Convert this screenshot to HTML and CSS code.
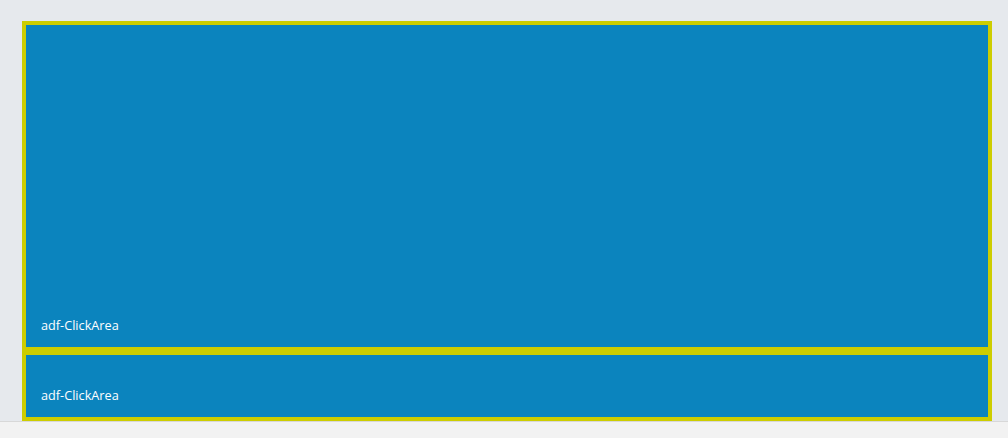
FILE: index.html
```html
<!DOCTYPE html>
<html>
<head>
<meta charset="utf-8">
<link rel="stylesheet" href="styles.css">
</head>
<body>
<div class="page">
  <div class="stack">
    <div class="area area-large"><span class="label">adf-ClickArea</span></div>
    <div class="area area-small"><span class="label">adf-ClickArea</span></div>
  </div>
</div>
<div class="footer"></div>
</body>
</html>
```
FILE: styles.css
```css
html, body {
  margin: 0;
  padding: 0;
  height: 100%;
}
body {
  background: #e6e9ed;
  font-family: "Open Sans", "Noto Sans", sans-serif;
  display: flex;
  flex-direction: column;
}
.page {
  padding: 21px 0 0 22px;
  flex: 1;
}
.stack {
  width: 970px;
  display: flex;
  flex-direction: column;
}
.area {
  box-sizing: border-box;
  background: #0b84be;
  border: 4px solid #cdcd00;
  display: flex;
  flex-direction: column;
  justify-content: flex-end;
  padding: 0 15px 14px 15px;
}
.area-large {
  height: 330px;
}
.area-small {
  height: 70px;
}
.label {
  color: #ffffff;
  font-size: 12.7px;
  font-weight: 500;
  line-height: 16px;
}
.footer {
  height: 16px;
  border-top: 1px solid #d8d8d8;
  background: #f2f2f2;
}
```
